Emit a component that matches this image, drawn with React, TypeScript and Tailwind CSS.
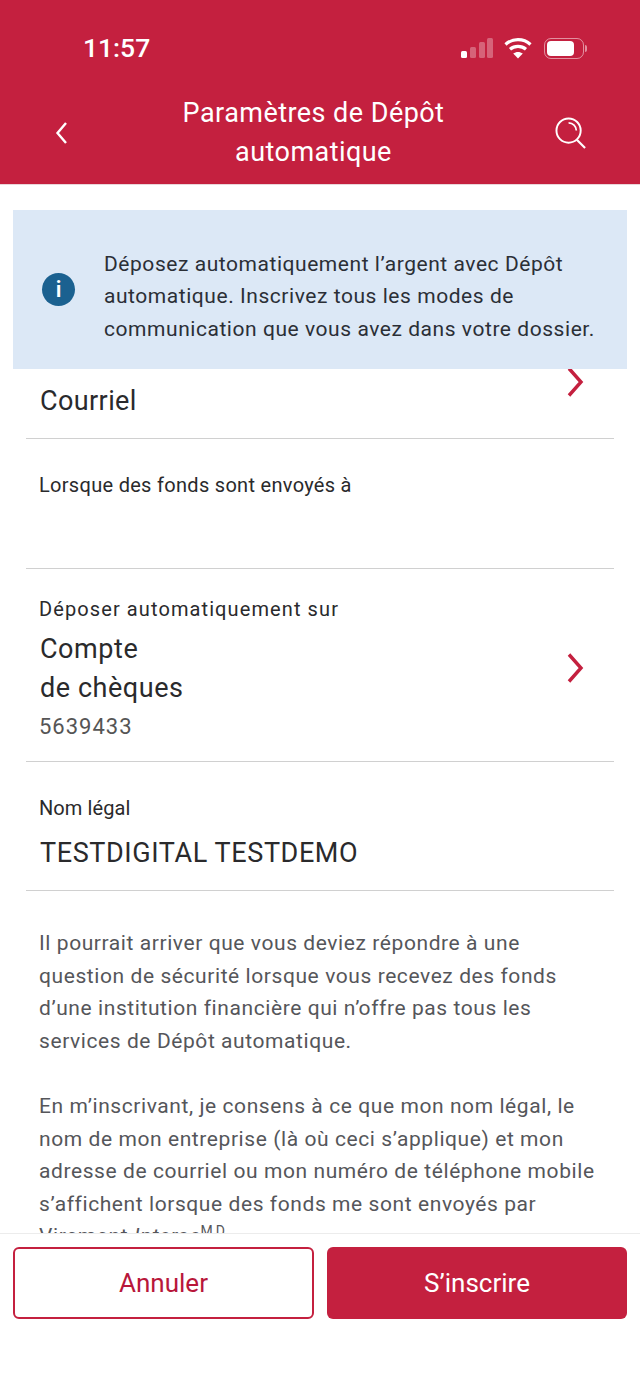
const red = 'bg-[#c4203f]';

function Chevron({ className = '' }: { className?: string }) {
  return (
    <svg width="17" height="30" viewBox="0 0 17 30" fill="none" className={className}>
      <path d="M2 1.5 L14 15 L2 28.5" stroke="#c4203f" strokeWidth="3.4" />
    </svg>
  );
}

function StatusIcons() {
  return (
    <div className="flex items-center gap-[10px]">
      <svg width="32" height="22" viewBox="0 0 32 22">
        <rect x="0" y="14" width="6" height="7" rx="1.5" fill="#fff" />
        <rect x="9" y="10" width="6" height="11" rx="1.5" fill="#fff" fillOpacity="0.3" />
        <rect x="18" y="5" width="6" height="16" rx="1.5" fill="#fff" fillOpacity="0.3" />
        <rect x="26" y="1" width="6" height="20" rx="1.5" fill="#fff" fillOpacity="0.3" />
      </svg>
      <svg width="28" height="22" viewBox="0 0 28 22" fill="none" className="ml-[1px]">
        <path d="M1.5 7.5 C8.5 1 19.5 1 26.5 7.5" stroke="#fff" strokeWidth="3.2" />
        <path d="M6 12.3 C10.5 8.4 17.5 8.4 22 12.3" stroke="#fff" strokeWidth="3.2" />
        <path d="M14 21.5 L9.2 16.6 C12 14.3 16 14.3 18.8 16.6 Z" fill="#fff" />
      </svg>
      <div className="flex items-center ml-[2px]">
        <div className="w-[40px] h-[21px] rounded-[7px] border-[1.5px] border-white/50 p-[2px]">
          <div className="w-[27px] h-full rounded-[4px] bg-white" />
        </div>
        <div className="w-[2px] h-[7px] rounded-r-sm bg-white/50 ml-[1px]" />
      </div>
    </div>
  );
}

export default function App() {
  return (
    <div className="w-[640px] h-[1387px] flex flex-col bg-white overflow-hidden font-['Roboto',sans-serif] text-[#2a2a2c]">
      <header className={`${red} h-[185px] text-white shrink-0 border-b border-[#e9d5d9]`}>
        <div className="flex items-center justify-between pl-[83px] pr-[53px] pt-[32px] h-[64px]">
          <span className="text-[26.5px] font-medium leading-[32px]">11:57</span>
          <StatusIcons />
        </div>
        <div className="flex items-center justify-between pl-[55px] pr-[53px] pt-[30px]">
          <svg width="13" height="22" viewBox="0 0 13 22" fill="none" stroke="#fff" strokeWidth="2.4">
            <path d="M11 1 L2.5 11 L11 21" />
          </svg>
          <div className="text-center text-[27px] leading-[39px] tracking-[0.45px] ml-[4px]">
            Paramètres de Dépôt<br />automatique
          </div>
          <svg width="32" height="32" viewBox="0 0 33 33" fill="none" stroke="#fff" strokeWidth="2">
            <circle cx="14" cy="14" r="12.5" />
            <path d="M14 6 A8 8 0 0 1 22 14" strokeWidth="1.8" />
            <path d="M22.5 23.5 L31 32" strokeWidth="2.2" />
          </svg>
        </div>
      </header>

      <main className="flex-1 min-h-0 overflow-hidden pt-[25px]">
        <div className="relative z-10 mx-[13px] h-[159px] bg-[#dce8f6] flex items-center pl-[29px] pr-[20px] gap-[29px]">
          <div className="shrink-0 w-[33px] h-[33px] rounded-full bg-[#1b6190] flex items-center justify-center text-white text-[22px] font-semibold leading-none">
            i
          </div>
          <p className="text-[21px] leading-[32.5px] tracking-[0.55px] text-[#2b2f36] mt-[14px] whitespace-nowrap">
            Déposez automatiquement l’argent avec Dépôt<br />
            automatique. Inscrivez tous les modes de<br />
            communication que vous avez dans votre dossier.
          </p>
        </div>

        <div className="mx-[26px]">
          <div className="relative h-[70px] border-b border-[#d0d0d0] pl-[14px] pt-[15px] text-[27px] leading-[34px] tracking-[0.4px]">
            Courriel
            <Chevron className="absolute right-[30px] -top-[2px]" />
          </div>

          <div className="h-[130px] border-b border-[#d0d0d0] pl-[13px] pt-[34px] text-[20px] leading-[24px] tracking-[0.3px]">
            Lorsque des fonds sont envoyés à
          </div>

          <div className="relative h-[193px] border-b border-[#d0d0d0] pl-[13px] pt-[28px]">
            <div className="text-[20px] leading-[24px] tracking-[1.1px]">Déposer automatiquement sur</div>
            <div className="text-[27px] leading-[39px] mt-[9px] pl-[1px] tracking-[0.55px]">Compte<br />de chèques</div>
            <div className="text-[22px] leading-[24px] tracking-[1px] mt-[7px] text-[#555]">5639433</div>
            <Chevron className="absolute right-[30px] top-[84px]" />
          </div>

          <div className="h-[129px] border-b border-[#d0d0d0] pl-[13px] pt-[34px]">
            <div className="text-[20px] leading-[24px] tracking-[0.1px]">Nom légal</div>
            <div className="text-[27px] leading-[34px] mt-[16px] pl-[1px] tracking-[0.6px]">TESTDIGITAL TESTDEMO</div>
          </div>
        </div>

        <div className="pl-[39px] pt-[36px] text-[21px] leading-[32.5px] tracking-[0.58px] text-[#55565a] whitespace-nowrap">
          <p>
            Il pourrait arriver que vous deviez répondre à une<br />
            question de sécurité lorsque vous recevez des fonds<br />
            d’une institution financière qui n’offre pas tous les<br />
            services de Dépôt automatique.
          </p>
          <p className="mt-[33px]">
            En m’inscrivant, je consens à ce que mon nom légal, le<br />
            nom de mon entreprise (là où ceci s’applique) et mon<br />
            adresse de courriel ou mon numéro de téléphone mobile<br />
            s’affichent lorsque des fonds me sont envoyés par<br />
            Virement <i>Interac</i><sup className="text-[14px] tracking-[3px]">MD</sup>
          </p>
        </div>
      </main>

      <footer className="relative z-10 h-[154px] shrink-0 bg-white border-t border-[#ececec] px-[13px] pt-[13px] flex gap-[13px] items-start">
        <button className="w-[301px] h-[72px] rounded-[6px] border-2 border-[#c4203f] text-[#b8173a] text-[26px]">Annuler</button>
        <button className={`w-[300px] h-[72px] rounded-[6px] ${red} text-white text-[26px]`}>S’inscrire</button>
      </footer>
    </div>
  );
}
